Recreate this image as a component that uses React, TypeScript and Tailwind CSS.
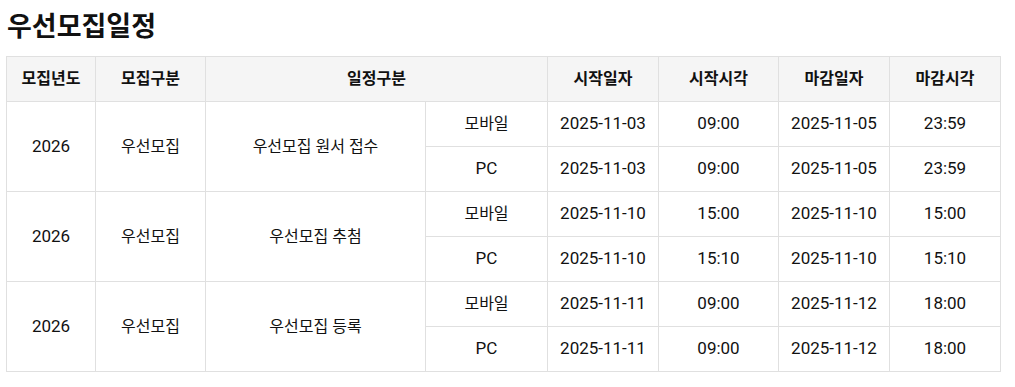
import React from "react";

const rows = [
  { year: "2026", kind: "우선모집", sched: "우선모집 원서 접수", sub: [
    ["모바일", "2025-11-03", "09:00", "2025-11-05", "23:59"],
    ["PC", "2025-11-03", "09:00", "2025-11-05", "23:59"],
  ]},
  { year: "2026", kind: "우선모집", sched: "우선모집 추첨", sub: [
    ["모바일", "2025-11-10", "15:00", "2025-11-10", "15:00"],
    ["PC", "2025-11-10", "15:10", "2025-11-10", "15:10"],
  ]},
  { year: "2026", kind: "우선모집", sched: "우선모집 등록", sub: [
    ["모바일", "2025-11-11", "09:00", "2025-11-12", "18:00"],
    ["PC", "2025-11-11", "09:00", "2025-11-12", "18:00"],
  ]},
];

const td = "border border-[#e0e0e0] text-center align-middle h-[45px] p-0";
const latin = "border border-[#e0e0e0] text-center align-middle h-[45px] p-0 text-[17px]";
const isLatin = (s: string) => /^[0-9A-Z:\-]+$/.test(s);

export default function App() {
  return (
    <div className="bg-white w-[1015px] h-[387px] pl-[6px] pt-[6px] text-[#111] font-['Roboto','Noto_Sans_CJK_KR',sans-serif]">
      <h1 className="text-[27px] font-bold leading-[38px] h-[38px] ml-[1px] font-['Noto_Sans_CJK_KR',sans-serif]">우선모집일정</h1>
      <table className="mt-[12px] border-collapse text-[16px] w-[994px] table-fixed">
        <colgroup>
          <col className="w-[89px]" />
          <col className="w-[110px]" />
          <col className="w-[220px]" />
          <col className="w-[122px]" />
          <col className="w-[111px]" />
          <col className="w-[120px]" />
          <col className="w-[111px]" />
          <col className="w-[111px]" />
        </colgroup>
        <thead>
          <tr className="bg-[#f5f5f5] font-bold">
            <th className={td}>모집년도</th>
            <th className={td}>모집구분</th>
            <th className={td} colSpan={2}>일정구분</th>
            <th className={td}>시작일자</th>
            <th className={td}>시작시각</th>
            <th className={td}>마감일자</th>
            <th className={td}>마감시각</th>
          </tr>
        </thead>
        <tbody>
          {rows.map((r, i) => (
            <React.Fragment key={i}>
              {r.sub.map((s, j) => (
                <tr key={j}>
                  {j === 0 && (
                    <>
                      <td className={latin} rowSpan={2}>{r.year}</td>
                      <td className={td} rowSpan={2}>{r.kind}</td>
                      <td className={td} rowSpan={2}>{r.sched}</td>
                    </>
                  )}
                  {s.map((c, k) => (
                    <td key={k} className={isLatin(c) ? latin : td}>{c}</td>
                  ))}
                </tr>
              ))}
            </React.Fragment>
          ))}
        </tbody>
      </table>
    </div>
  );
}
